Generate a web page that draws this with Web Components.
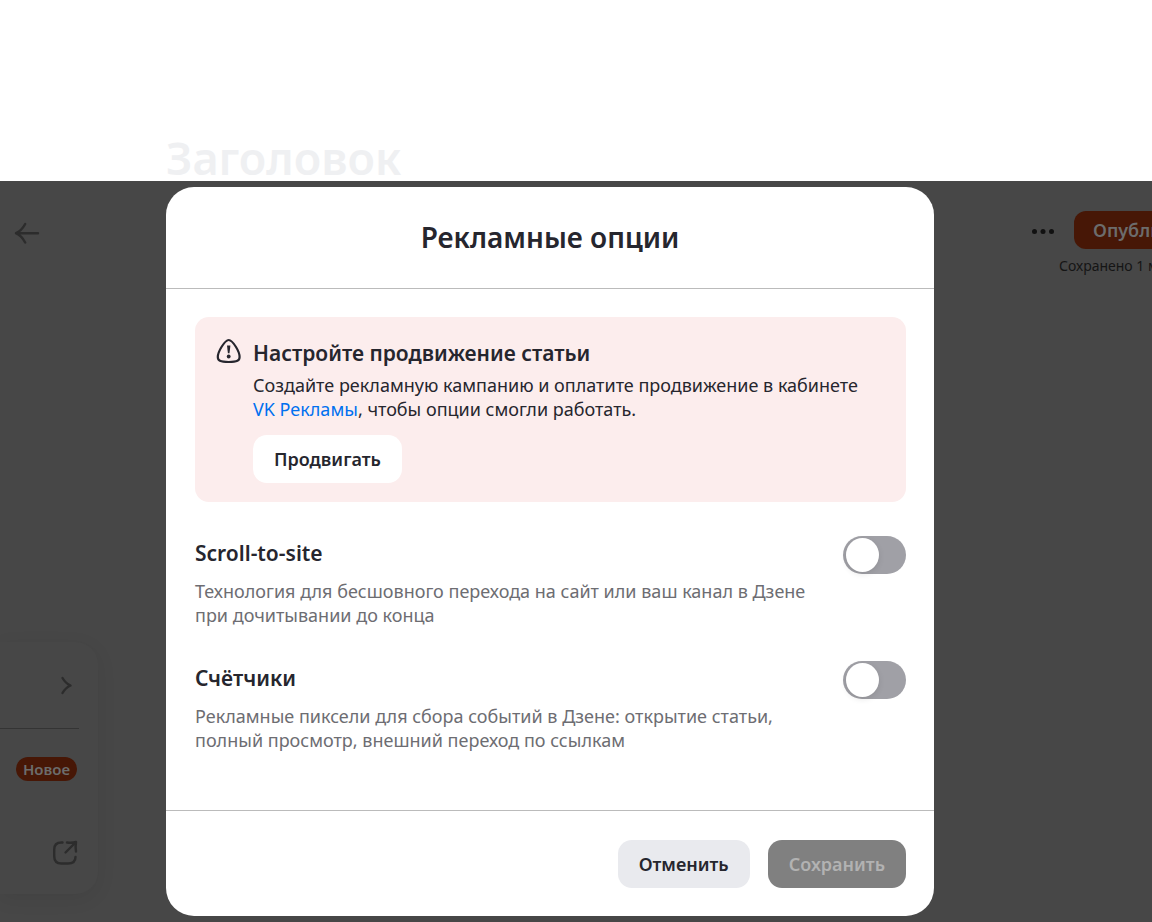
<!DOCTYPE html>
<html lang="ru">
<head>
<meta charset="utf-8">
<meta name="viewport" content="width=device-width, initial-scale=1">
<title>Рекламные опции</title>
<style>
  html, body {
    margin: 0;
    min-height: 100%;
  }
  body {
    font-family: "Noto Sans", "Open Sans", sans-serif;
    font-size: 18px;
    line-height: 24px;
    color: #26262e;
    background: #fff;
  }
</style>
</head>
<body>
<article-editor>
  <editor-stage>
    <editor-sidebar slot="left"></editor-sidebar>
    <modal-dialog heading="Рекламные опции">
      <promo-alert heading="Настройте продвижение статьи">
        Создайте рекламную кампанию и оплатите продвижение в кабинете <a slot="link" href="#ads">VK Рекламы</a>
      </promo-alert>
      <option-switch name="scroll" heading="Scroll-to-site">Технология для бесшовного перехода на сайт или ваш канал в Дзене при дочитывании до конца</option-switch>
      <option-switch name="counters" heading="Счётчики">Рекламные пиксели для сбора событий в Дзене: открытие статьи, полный просмотр, внешний переход по ссылкам</option-switch>
      <ui-button slot="footer" variant="secondary">Отменить</ui-button>
      <ui-button slot="footer" variant="primary" disabled>Сохранить</ui-button>
    </modal-dialog>
    <editor-actions slot="right"></editor-actions>
  </editor-stage>
</article-editor>

<script>
class BaseElement extends HTMLElement {
    constructor() {
        super();
        this.attachShadow({ mode: 'open' });
    }

    connectedCallback() {
        this.render();
    }
}

class ArticleEditor extends BaseElement {
    render() {
        this.shadowRoot.innerHTML = `
        <style>
          :host {
            display: flex;
            flex-direction: column;
            min-height: 100vh;
          }
          header {
            padding: 134px 0 0 166px;
          }
          h1 {
            margin: 0;
            font-size: 45px;
            font-weight: 600;
            line-height: 47px;
            color: #eff0f2;
          }
        </style>
        <header><h1>Заголовок</h1></header>
        <slot></slot>
      `;
    }
}

class EditorStage extends BaseElement {
    render() {
        this.shadowRoot.innerHTML = `
        <style>
          :host {
            flex: 1;
            display: grid;
            grid-template-columns: 166px minmax(0, 768px) minmax(0, 1fr);
            background: #474747;
          }
          .center {
            padding: 6px 0;
          }
        </style>
        <slot name="left"></slot>
        <div class="center"><slot></slot></div>
        <slot name="right"></slot>
      `;
    }
}

class EditorSidebar extends BaseElement {
    render() {
        this.shadowRoot.innerHTML = `
        <style>
          :host {
            display: flex;
            flex-direction: column;
            justify-content: space-between;
            align-items: flex-start;
            padding: 36px 0 28px;
          }
          button {
            display: block;
            padding: 0;
            border: 0;
            background: none;
          }
          svg {
            display: block;
            fill: none;
            stroke: #2c2c2c;
            stroke-width: 2.4;
            stroke-linecap: round;
            stroke-linejoin: round;
          }
          .back {
            margin-left: 12px;
          }
          .card {
            box-sizing: border-box;
            width: 98px;
            height: 252px;
            padding: 28px 19px 26px 0;
            display: flex;
            flex-direction: column;
            align-items: flex-end;
            border-radius: 0 22px 22px 0;
            background: #474747;
            box-shadow: 0 5px 20px rgba(0, 0, 0, 0.07);
          }
          hr {
            width: 100%;
            margin: 28px 0;
            border: 0;
            border-top: 1px solid #343434;
          }
          .badge {
            padding: 0 7px;
            margin: 0 2px 57px 0;
            border-radius: 12px;
            font-size: 15px;
            font-weight: 600;
            line-height: 24px;
            color: #6c6c6c;
            background: #471706;
          }
        </style>
        <button class="back" aria-label="Назад">
          <svg width="30" height="30" viewBox="0 0 30 30"><path d="M26 16.200H4M13.200 7C11 11 8 14.500 4 16.200C8 18 11 21.500 13.200 25.500"/></svg>
        </button>
        <div class="card">
          <button aria-label="Развернуть">
            <svg width="24" height="30" viewBox="0 0 24 30"><path d="M7.500 8C9.500 11.500 12 14 15.500 15.500C12 17 9.500 19.500 7.500 23"/></svg>
          </button>
          <hr>
          <span class="badge">Новое</span>
          <button aria-label="Открыть">
            <svg width="28" height="28" viewBox="0 0 28 28"><path d="M11.500 4.500H10.500C5.500 4.500 3.200 6.500 3.200 11.500V18C3.200 23.500 5.500 25.500 10.500 25.500H17C22 25.500 24.500 23.500 24.500 19M16 4.500C19 5 22 5 25 4C24.500 7 24.500 10 25 13.500M24.500 4.500L14.500 14.500"/></svg>
          </button>
        </div>
      `;
    }
}

class EditorActions extends BaseElement {
    render() {
        this.shadowRoot.innerHTML = `
        <style>
          :host {
            display: block;
            overflow: hidden;
            padding: 30px 0 0 96px;
            white-space: nowrap;
          }
          .row {
            display: flex;
            align-items: center;
            gap: 18px;
          }
          button {
            flex: none;
            border: 0;
            padding: 0;
            font: inherit;
            background: none;
          }
          svg {
            display: block;
            fill: #111;
          }
          .publish {
            height: 38px;
            padding: 0 19px;
            border-radius: 12px;
            font-size: 18px;
            font-weight: 600;
            color: #6c6c6c;
            background: #471706;
          }
          p {
            margin: 6px 0 0 29px;
            font-size: 14px;
            line-height: 22px;
            color: #151515;
          }
        </style>
        <div class="row">
          <button aria-label="Ещё">
            <svg width="26" height="26" viewBox="0 0 26 26"><circle cx="4.500" cy="14.500" r="2.500"/><circle cx="13" cy="14.500" r="2.500"/><circle cx="21.500" cy="14.500" r="2.500"/></svg>
          </button>
          <button class="publish">Опубликовать</button>
        </div>
        <p>Сохранено 1 минуту назад</p>
      `;
    }
}

class ModalDialog extends BaseElement {
    render() {
        this.shadowRoot.innerHTML = `
        <style>
          :host {
            display: block;
          }
          section {
            border-radius: 28px;
            background: #fff;
          }
          h2 {
            margin: 0;
            padding: 32px 29px 33px;
            border-bottom: 1px solid #bbb;
            font-size: 28px;
            font-weight: 600;
            line-height: 36px;
            text-align: center;
          }
          .body {
            display: flex;
            flex-direction: column;
            gap: 34px;
            padding: 28px 28px 58px 29px;
          }
          footer {
            display: flex;
            justify-content: flex-end;
            gap: 18px;
            padding: 29px 28px 28px;
            border-top: 1px solid #bbb;
          }
        </style>
        <section role="dialog" aria-labelledby="title">
          <h2 id="title">${this.getAttribute('heading')}</h2>
          <div class="body"><slot></slot></div>
          <footer><slot name="footer"></slot></footer>
        </section>
      `;
    }
}

class PromoAlert extends BaseElement {
    render() {
        this.shadowRoot.innerHTML = `
        <style>
          :host {
            display: flex;
            gap: 10px;
            padding: 20px 28px 19px 20px;
            border-radius: 14px;
            background: #fceded;
          }
          svg {
            flex: none;
            fill: none;
            stroke: #26262e;
            stroke-width: 2.2;
          }
          .dot {
            fill: #26262e;
            stroke: none;
          }
          h3 {
            margin: 2px 0 6px;
            font-size: 21px;
            font-weight: 600;
            line-height: 28px;
          }
          p {
            margin: 0 0 14px;
          }
          ::slotted(a) {
            color: #0070f0;
            text-decoration: none;
          }
        </style>
        <svg width="28" height="28" viewBox="0 0 28 28" aria-hidden="true">
          <path d="M13.700 3C11 3 9 6 6.500 10C4 14 2.800 17 2.800 20C2.800 23.500 5 25 13.700 25S24.600 23.500 24.600 20C24.600 17 23.500 14 21 10C18.500 6 16.500 3 13.700 3Z"/>
          <path class="dot" d="M12 8.500H15.400L14.500 16.200H12.900Z"/>
          <circle class="dot" cx="13.700" cy="19.500" r="1.900"/>
        </svg>
        <div>
          <h3>${this.getAttribute('heading')}</h3>
          <p><slot></slot><slot name="link"></slot>, чтобы опции смогли работать.</p>
          <ui-button variant="plain">Продвигать</ui-button>
        </div>
      `;
    }
}

class OptionSwitch extends BaseElement {
    render() {
        const name = this.getAttribute('name');
        this.shadowRoot.innerHTML = `
        <style>
          :host {
            display: flex;
            align-items: flex-start;
            gap: 28px;
          }
          .text {
            flex: 1;
            min-width: 0;
          }
          label {
            display: block;
            margin: 3px 0 12px;
            font-size: 21px;
            font-weight: 600;
            line-height: 28px;
          }
          p {
            margin: 0;
            color: #6d6d72;
          }
          input {
            appearance: none;
            flex: none;
            box-sizing: border-box;
            width: 63px;
            height: 38px;
            margin: 0;
            padding: 2px 3px;
            border-radius: 19px;
            background: #a0a0a6;
          }
          input::before {
            content: '';
            display: block;
            width: 33px;
            height: 34px;
            border-radius: 50%;
            background: #fff;
            box-shadow: 0 2px 6px rgba(0, 0, 0, 0.1);
          }
          input:checked {
            background: #26262e;
          }
          input:checked::before {
            margin-left: auto;
          }
        </style>
        <div class="text">
          <label for="${name}">${this.getAttribute('heading')}</label>
          <p><slot></slot></p>
        </div>
        <input type="checkbox" role="switch" id="${name}">
      `;
    }
}

class UiButton extends BaseElement {
    render() {
        this.shadowRoot.innerHTML = `
        <style>
          :host {
            display: inline-block;
            vertical-align: top;
          }
          button {
            display: block;
            height: 48px;
            padding: 0 21px;
            border: 0;
            border-radius: 14px;
            font: inherit;
            font-size: 18px;
            font-weight: 600;
            color: #26262e;
            background: #fff;
          }
          .secondary {
            background: #e9eaee;
          }
          .primary {
            color: #fff;
            background: #000;
          }
          .primary:disabled {
            color: #b2b2b2;
            background: #808080;
          }
        </style>
        <button class="${this.getAttribute('variant')}" ${this.hasAttribute('disabled') ? 'disabled' : ''}><slot></slot></button>
      `;
    }
}

customElements.define('ui-button', UiButton);
customElements.define('option-switch', OptionSwitch);
customElements.define('promo-alert', PromoAlert);
customElements.define('modal-dialog', ModalDialog);
customElements.define('editor-actions', EditorActions);
customElements.define('editor-sidebar', EditorSidebar);
customElements.define('editor-stage', EditorStage);
customElements.define('article-editor', ArticleEditor);
</script>
</body>
</html>
